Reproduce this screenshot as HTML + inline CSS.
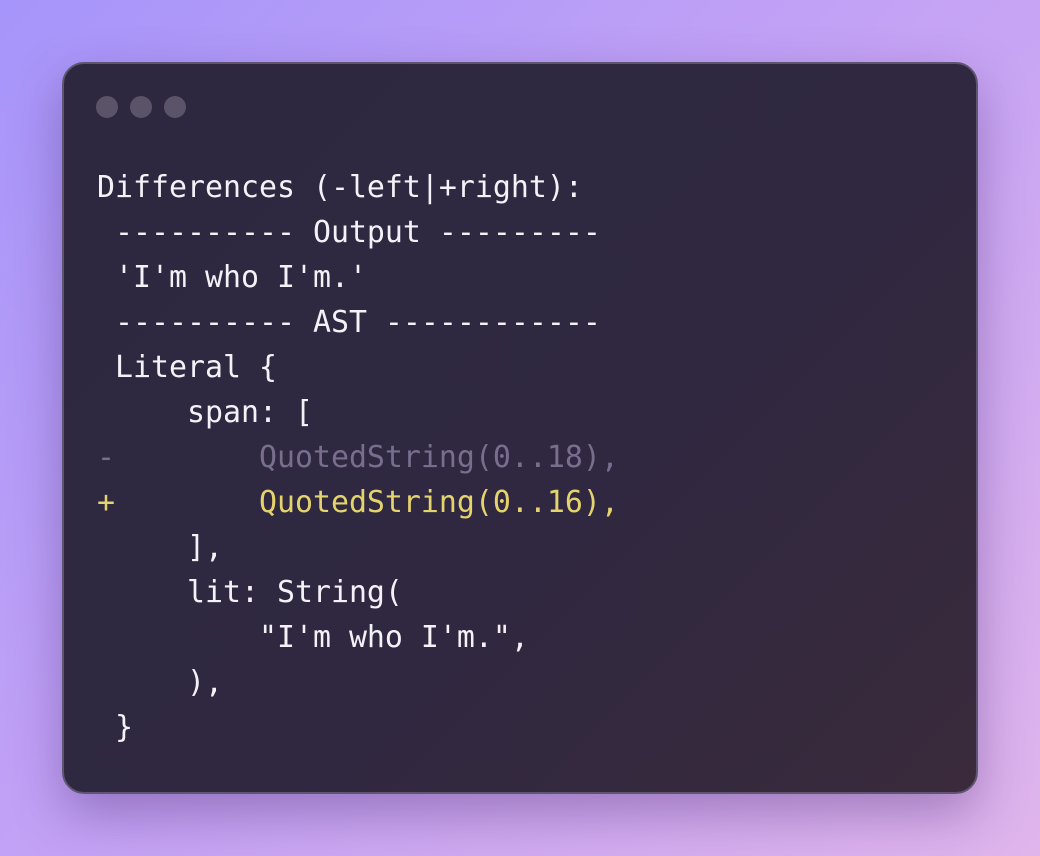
<!DOCTYPE html>
<html><head><style>
html,body{margin:0;padding:0;}
body{width:1040px;height:856px;overflow:hidden;background:linear-gradient(135deg,#a695fa 0%,#c5a3f5 50%,#e0b5ec 100%);position:relative;}
.card{position:absolute;left:62px;top:62px;width:912px;height:728px;border-radius:22px;border:2px solid #5e5670;background:linear-gradient(135deg,#2d2740 0%,#2f2840 55%,#3a2a3c 100%);box-shadow:0 20px 50px rgba(60,30,100,0.35);}
.dot{position:absolute;top:32px;width:22px;height:22px;border-radius:50%;background:#5b5468;}
pre{position:absolute;left:33px;top:101px;margin:0;font-family:"DejaVu Sans Mono","Liberation Mono",monospace;font-size:29.9px;line-height:45px;color:#f4f2f7;}
.m{color:#7a6e8e}.p{color:#e5d36c}
</style></head><body>
<div class="card">
<div class="dot" style="left:32px"></div><div class="dot" style="left:66px"></div><div class="dot" style="left:100px"></div>
<pre>Differences (-left|+right):
 ---------- Output ---------
 'I'm who I'm.'
 ---------- AST ------------
 Literal {
     span: [
<span class="m">-        QuotedString(0..18),</span>
<span class="p">+        QuotedString(0..16),</span>
     ],
     lit: String(
         "I'm who I'm.",
     ),
 }</pre>
</div>
</body></html>
